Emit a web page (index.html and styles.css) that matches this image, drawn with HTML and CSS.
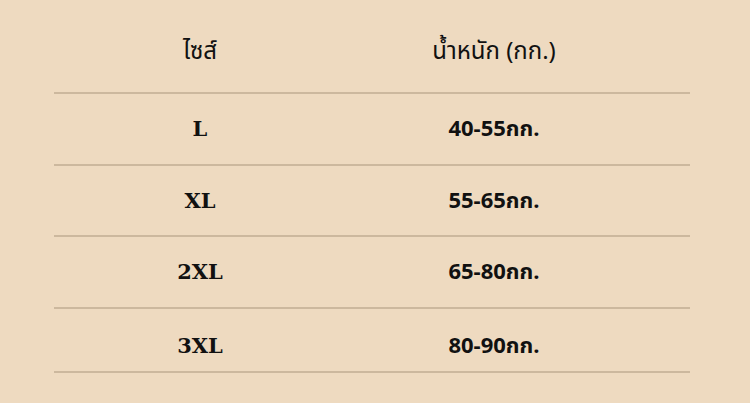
FILE: index.html
```html
<!DOCTYPE html>
<html lang="th">
<head>
<meta charset="utf-8">
<link rel="stylesheet" href="styles.css">
</head>
<body>
<div class="table">
  <div class="row head">
    <div class="cell">ไซส์</div>
    <div class="cell">น้ำหนัก (กก.)</div>
  </div>
  <div class="row">
    <div class="cell size">L</div>
    <div class="cell weight">40-55กก.</div>
  </div>
  <div class="row">
    <div class="cell size">XL</div>
    <div class="cell weight">55-65กก.</div>
  </div>
  <div class="row">
    <div class="cell size">2XL</div>
    <div class="cell weight">65-80กก.</div>
  </div>
  <div class="row last">
    <div class="cell size">3XL</div>
    <div class="cell weight">80-90กก.</div>
  </div>
</div>
</body>
</html>
```
FILE: styles.css
```css
html, body {
  margin: 0;
  padding: 0;
  background: #eedac0;
  width: 750px;
  height: 403px;
  overflow: hidden;
}
.table {
  margin-left: 54px;
  width: 636px;
  color: #111;
}
.row {
  box-sizing: border-box;
  display: grid;
  grid-template-columns: 292px 296px;
  height: 71.5px;
  align-items: center;
  border-bottom: 2px solid #ccb89e;
}
.row.head {
  height: 94px;
  padding-top: 12px;
}
.row.last {
  height: 64px;
  padding-top: 12px;
}
.cell {
  text-align: center;
  line-height: 24px;
}
.head .cell {
  font-family: "Noto Sans Thai", "Noto Sans", "DejaVu Sans", sans-serif;
  font-size: 24px;
  font-weight: 400;
}
.size {
  font-family: "DejaVu Serif", serif;
  font-weight: 700;
  font-size: 21px;
  padding-top: 1px;
}
.weight {
  font-family: "Noto Sans Thai", "Noto Sans", sans-serif;
  font-weight: 700;
  font-size: 22px;
  padding-top: 3px;
}
```
